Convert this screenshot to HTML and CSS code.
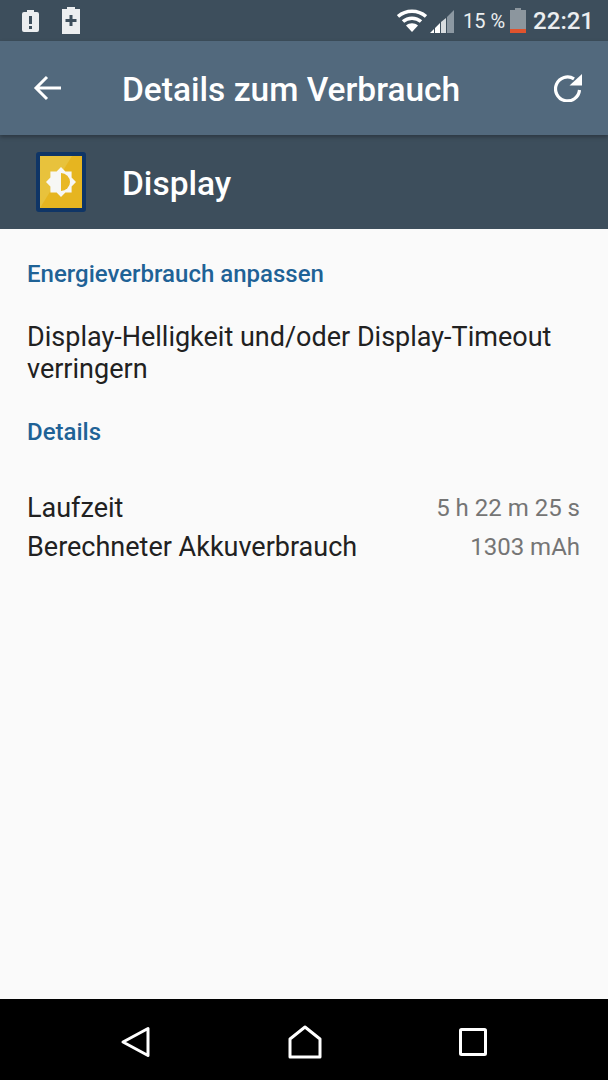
FILE: index.html
```html
<html lang="de">
<head>
    <meta charset="UTF-8">
    <meta name="viewport" content="width=device-width, initial-scale=1.0">
    <title>Details zum Verbrauch</title>
    <link rel="stylesheet" href="styles.css">
</head>
<body>
    <div class="phone">
        <div class="statusbar">
            <div class="status-left">
                <svg class="batt-a" width="17" height="24" viewBox="0 0 17 24">
                    <path d="M5 1h7v2h3a2 2 0 0 1 2 2v16a2 2 0 0 1-2 2H2a2 2 0 0 1-2-2V5a2 2 0 0 1 2-2h3z" fill="#eceef0"/>
                    <rect x="7" y="7" width="3" height="8" fill="#3d4e5c"/>
                    <rect x="7" y="17" width="3" height="3" fill="#3d4e5c"/>
                </svg>
                <svg class="batt-b" width="18" height="27" viewBox="0 0 18 27">
                    <path d="M5 0h8v2h5v25H0V2h5z" fill="#eceef0"/>
                    <rect x="3.500" y="12" width="11" height="3" fill="#3d4e5c"/>
                    <rect x="7.500" y="8" width="3" height="11" fill="#3d4e5c"/>
                </svg>
            </div>
            <div class="status-right">
                <svg class="wifi" width="30" height="24" viewBox="0 0 30 24">
                    <path d="M1 7.500C9 .5 21 .5 29 7.500" fill="none" stroke="#fff" stroke-width="3.500"/>
                    <path d="M6 12.500C11 8 19 8 24 12.500" fill="none" stroke="#fff" stroke-width="3.500"/>
                    <path d="M15 23L9 16.500C12.500 13.500 17.500 13.500 21 16.500z" fill="#fff"/>
                </svg>
                <svg class="signal" width="24" height="24" viewBox="0 0 24 24">
                    <path d="M0 24h4v-4zM5 24h5v-10l-5 5z" fill="#fff"/>
                    <path d="M11 24h5V9l-5 4z" fill="#d8dcdf"/>
                    <path d="M17 24h7V1l-7 7z" fill="#8c98a2"/>
                </svg>
                <span class="pct">15 %</span>
                <svg class="batt-c" width="16" height="25" viewBox="0 0 16 25">
                    <path d="M5 0h6v2h5v23H0V2h5z" fill="#8c969e"/>
                    <rect y="21" width="16" height="4" fill="#e0532d"/>
                </svg>
                <span class="clock">22:21</span>
            </div>
        </div>

        <div class="toolbar">
            <svg class="back" width="28" height="26" viewBox="0 0 28 26">
                <path d="M14 2L3 13l11 11M3 13h25" fill="none" stroke="#fff" stroke-width="3"/>
            </svg>
            <div class="toolbar-title">Details zum Verbrauch</div>
            <svg class="refresh" width="28" height="28" viewBox="0 0 28 28">
                <path d="M25.500 16A12 12 0 1 1 20 4.800" fill="none" stroke="#fff" stroke-width="3.200"/>
                <path d="M28 0V11.500H15.500z" fill="#fff"/>
            </svg>
        </div>

        <div class="app-header">
            <div class="app-icon">
                <svg width="50" height="60" viewBox="0 0 50 60">
                    <rect x="2" y="2" width="46" height="56" rx="1" fill="#e8c23c" stroke="#0f3566" stroke-width="4"/>
                    <path d="M4 56L36 4h10v52z" fill="#e6b520"/>
                    <polygon points="25,15 29.400,19.400 35.600,19.400 35.600,25.600 40,30 35.600,34.400 35.600,40.600 29.400,40.600 25,45 20.600,40.600 14.400,40.600 14.400,34.400 10,30 14.400,25.600 14.400,19.400 20.600,19.400" fill="#f7f7f5"/>
                    <path d="M25 21a9 9 0 0 1 0 18z" fill="#e8b825"/>
                </svg>
            </div>
            <div class="app-name">Display</div>
        </div>

        <div class="content">
            <div class="section-title first">Energieverbrauch anpassen</div>
            <div class="tip">Display-Helligkeit und/oder Display-Timeout verringern</div>
            <div class="section-title">Details</div>
            <div class="rows">
                <div class="row"><span>Laufzeit</span><span class="value">5 h 22 m 25 s</span></div>
                <div class="row"><span>Berechneter Akkuverbrauch</span><span class="value">1303 mAh</span></div>
            </div>
        </div>

        <div class="navbar">
            <svg width="30" height="32" viewBox="0 0 30 32">
                <path d="M3 16L28 2.500v27z" fill="none" stroke="#fff" stroke-width="3" stroke-linejoin="round"/>
            </svg>
            <svg width="34" height="34" viewBox="0 0 34 34">
                <path d="M2 32V14L17 2l15 12v18z" fill="none" stroke="#fff" stroke-width="3" stroke-linejoin="round"/>
            </svg>
            <svg width="28" height="28" viewBox="0 0 28 28">
                <rect x="1.500" y="1.500" width="25" height="25" rx="1" fill="none" stroke="#fff" stroke-width="3"/>
            </svg>
        </div>
    </div>
</body>
</html>
```

FILE: styles.css
```css
:root {
    --status: #3d4e5c;
    --toolbar: #52697d;
    --accent: #1f6296;
    --text-color: #212121;
}

body {
    margin: 0;
    background: #fafafa;
    font-family: 'Roboto', sans-serif;
    color: var(--text-color);
}

.phone {
    width: 608px;
    height: 1080px;
    display: flex;
    flex-direction: column;
    overflow: hidden;
}

.statusbar {
    height: 41px;
    background: var(--status);
    display: flex;
    justify-content: space-between;
    align-items: center;
    color: #eceef0;
}

.status-left {
    display: flex;
    align-items: center;
    gap: 23px;
    padding-left: 22px;
}

.status-right {
    display: flex;
    align-items: center;
    padding-right: 14px;
}

.wifi { margin-right: 3px; }
.signal { margin-right: 9px; }

.pct {
    font-size: 20px;
    margin-right: 5px;
}

.batt-c { margin-right: 7px; }

.clock {
    font-size: 24px;
    font-weight: 500;
}

.toolbar {
    height: 94px;
    background: var(--toolbar);
    display: flex;
    align-items: center;
    padding: 0 26px 0 33px;
    position: relative;
    box-shadow: 0 2px 4px rgba(0,0,0,0.3);
}

.toolbar-title {
    flex: 1;
    margin-left: 61px;
    padding-top: 2px;
    color: #fff;
    font-size: 33.500px;
    font-weight: 500;
}

.app-header {
    height: 94px;
    background: var(--status);
    display: flex;
    align-items: center;
    padding-left: 36px;
}

.app-icon {
    width: 50px;
    height: 60px;
}

.app-name {
    margin-left: 36px;
    padding-top: 2px;
    color: #fff;
    font-size: 33.500px;
    font-weight: 500;
}

.content {
    flex: 1;
    padding: 0 28px 0 27px;
}

.section-title {
    font-size: 24px;
    font-weight: 500;
    color: var(--accent);
    line-height: 28px;
    margin-top: 33px;
}

.section-title.first {
    margin-top: 31px;
}

.tip {
    font-size: 27px;
    line-height: 32px;
    margin-top: 33px;
}

.rows {
    margin-top: 42px;
}

.row {
    display: flex;
    justify-content: space-between;
    align-items: center;
    font-size: 27px;
    height: 39px;
}

.value {
    font-size: 24px;
    color: #757575;
}

.navbar {
    box-sizing: border-box;
    height: 81px;
    background: #000;
    display: flex;
    justify-content: space-between;
    align-items: center;
    padding: 5px 121px 0 120px;
}
```
